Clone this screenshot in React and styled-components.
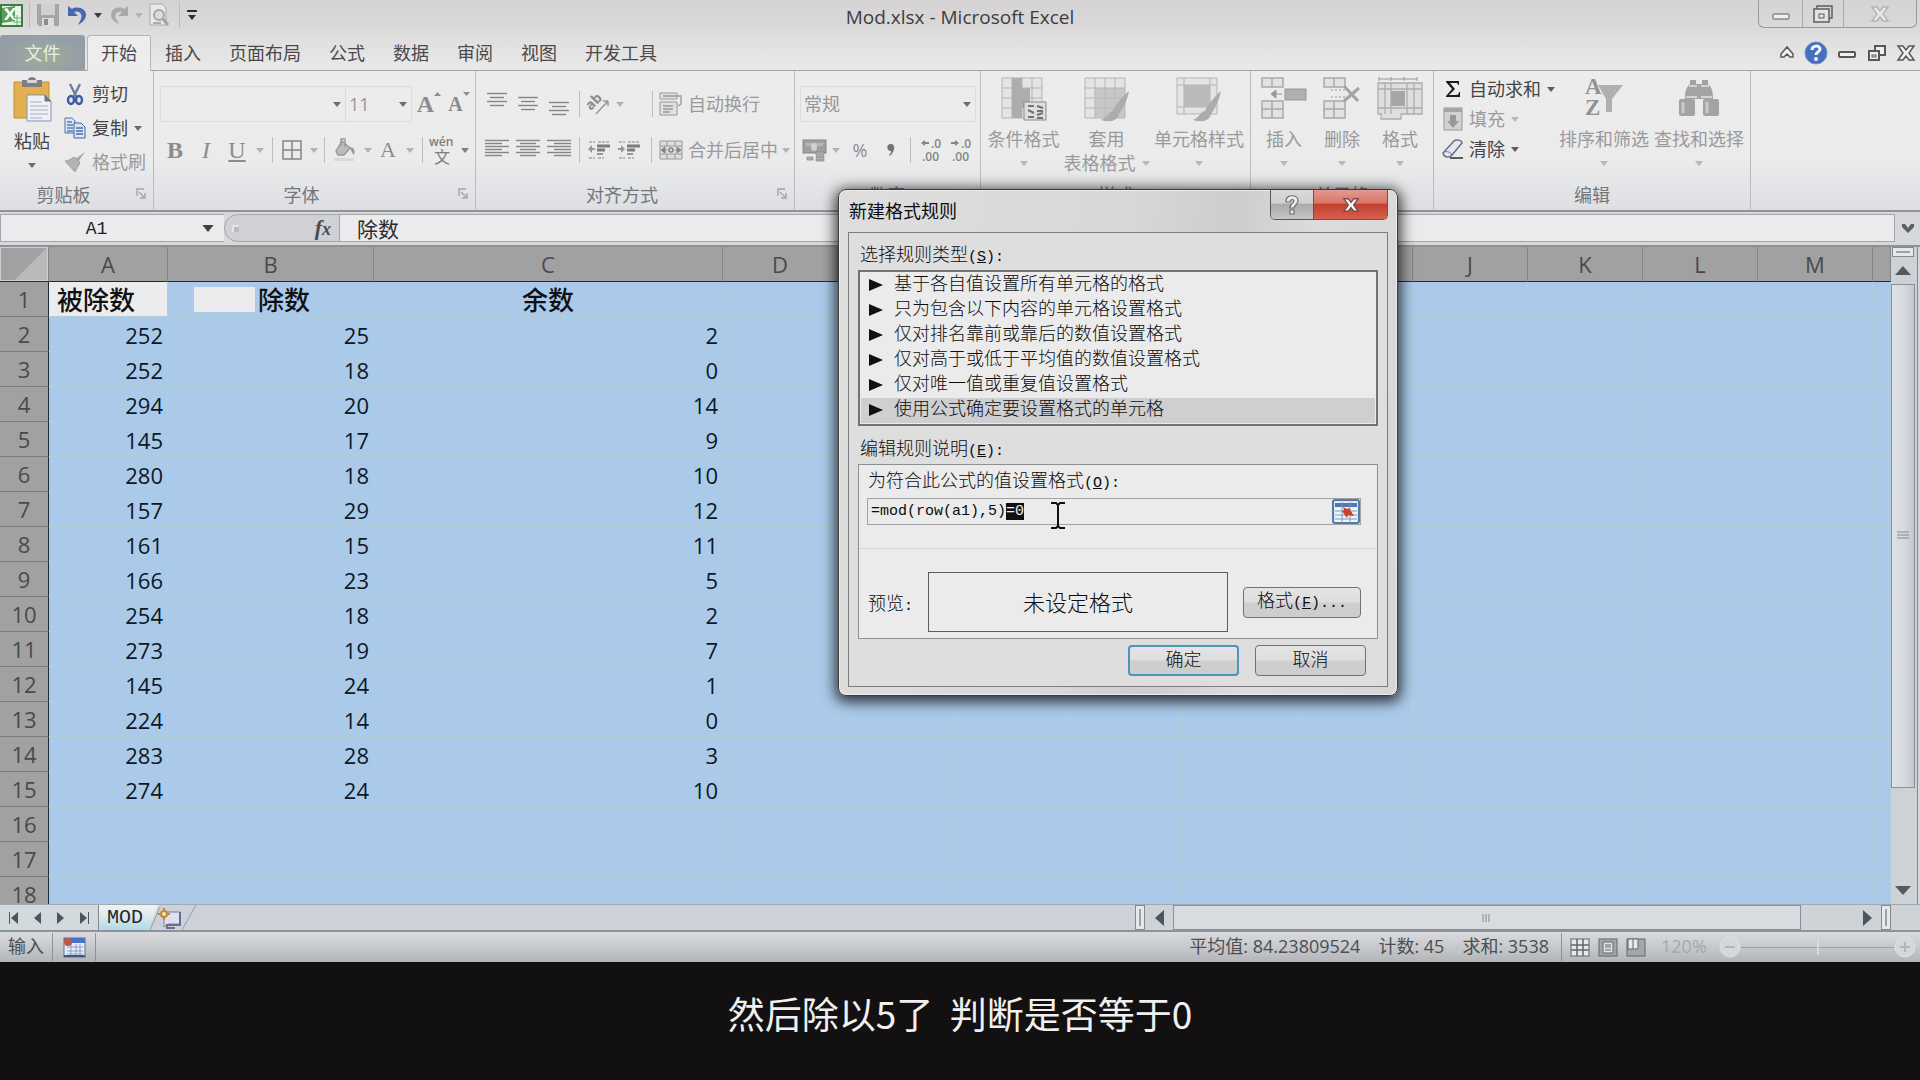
import React, { useEffect, useRef } from 'react'
import styled, { createGlobalStyle, css } from 'styled-components'

const uiFont = '"Open Sans", "Noto Sans CJK SC", sans-serif';
const monoFont = '"Liberation Mono", "Noto Sans CJK SC", monospace';

const GlobalStyle = createGlobalStyle`
    * {
        box-sizing: border-box;
    }

    body {
        margin: 0;
        background-color: #121011;
        font-family: ${uiFont};
        font-size: 18px;
        color: #454548;
    }

    button, input, select {
        font: inherit;
        color: inherit;
        margin: 0;
        padding: 0;
        border: none;
        background: none;
        outline: none;
    }

    svg {
        display: block;
        flex: none;
        overflow: visible;
    }
`;

const Screen = styled.div`
    display: flex;
    flex-direction: column;
    min-height: 100vh;
`;

const Workbook = styled.main`
    position: relative;
    display: flex;
    flex-direction: column;
    height: calc(100vh - 118px);
    background-color: #cdd1d6;
`;

const Subtitle = styled.p`
    flex: 1;
    display: flex;
    justify-content: center;
    align-items: center;
    margin: 0;
    padding-bottom: 16px;
    color: #f0f0f0;
    font-family: "Noto Sans CJK SC", sans-serif;
    font-size: 37px;
    line-height: 54px;
    white-space: pre;
`;

/* ---------- title bar and tabs ---------- */

const TitleBar = styled.header`
    display: grid;
    grid-template-columns: 1fr auto 1fr;
    align-items: start;
    height: 35px;
    background: linear-gradient(to bottom, #d5d3d3 0, #d9d7d7 22px, #dfdedf 35px);

    h1 {
        margin: 0;
        font-size: 19px;
        font-weight: 400;
        line-height: 34px;
        color: #3d3d3f;
    }
`;

const QuickAccess = styled.div`
    display: flex;
    align-items: center;
    height: 30px;
`;

const WindowControls = styled.div`
    justify-self: end;
    display: flex;
    height: 28px;
    margin-right: 3px;
    border: 1px solid #9a9a9c;
    border-top: none;
    border-radius: 0 0 6px 6px;

    button + button {
        border-left: 1px solid #a9a9ab;
    }
`;

const IconButton = styled.button`
    display: flex;
    justify-content: center;
    align-items: center;
    flex: none;
    width: ${props => props.$width || 30}px;
    height: 100%;
    color: #8b8b8d;
`;

const Separator = styled.span`
    display: flex;
    justify-content: center;
    flex: none;
    width: ${props => props.$width || 8}px;

    &::before {
        content: "";
        width: 1px;
        height: 26px;
        background-color: #bcbcbe;
    }
`;

const TabRow = styled.nav`
    display: flex;
    justify-content: space-between;
    height: 36px;
    background: linear-gradient(to bottom, #dfdedf, #e9e9e9);
    border-bottom: 1px solid #a3a5a9;
`;

const TabList = styled.div`
    display: flex;
`;

const Tab = styled.button`
    height: 36px;
    padding: 0 14px;
    border-radius: 3px 3px 0 0;
    color: #4a4a4c;
    line-height: 34px;

    ${props => props.$file && css`
        width: 85px;
        height: 35px;
        margin-right: 2px;
        background: radial-gradient(ellipse at 50% 60%, #a0ad9e, #949ca6 75%);
        color: #e6f0dc;
    `}

    ${props => props.$active && css`
        background-color: #ededed;
        box-shadow: inset 1px 1px 0 #b4b6ba, inset -1px 0 0 #b4b6ba;
    `}
`;

const TabTools = styled.div`
    display: flex;
`;

/* ---------- ribbon ---------- */

const RibbonBar = styled.div`
    display: flex;
    flex: none;
    height: 141px;
    background: linear-gradient(to bottom, #ececec 0, #ebebeb 90px, #dddfe3 139px);
    border-bottom: 2px solid #929497;
`;

const GroupBox = styled.section`
    position: relative;
    display: flex;
    flex-direction: column;
    flex: none;
    width: ${props => props.$width}px;
    border-right: 1px solid #b9bbbe;

    h2 {
        margin: 0;
        padding-right: ${props => (props.$launcher ? 26 : 0)}px;
        font-size: 18px;
        font-weight: 400;
        line-height: 30px;
        text-align: center;
        color: #73767b;
    }

    > button {
        position: absolute;
        right: 7px;
        bottom: 11px;
        width: 10px;
        height: 11px;
        color: #a3a5a8;
    }
`;

const GroupBody = styled.div`
    display: flex;
    height: 110px;
    padding-left: ${props => props.$pad || 0}px;
    flex-direction: ${props => (props.$rows ? 'column' : 'row')};
    gap: ${props => (props.$rows ? 10 : 0)}px;
    padding-top: ${props => (props.$rows ? 15 : 3)}px;
`;

const ToolRow = styled.div`
    display: flex;
    align-items: center;
    height: 36px;
`;

const Spacer = styled.span`
    flex: none;
    width: 20px;
`;

const SmallList = styled.div`
    display: flex;
    flex-direction: column;
    width: ${props => props.$width}px;
    padding-top: ${props => props.$top || 0}px;
`;

const SmallButton = styled.button`
    display: flex;
    align-items: center;
    gap: 4px;
    height: ${props => props.$height || 34}px;
    color: ${props => (props.$on ? '#454548' : '#9a9a9c')};
    line-height: 24px;
    white-space: nowrap;

    > span {
        margin-right: 2px;
    }
`;

const IconSlot = styled.i`
    display: flex;
    justify-content: center;
    width: ${props => props.$width || 24}px;
`;

const BigButton = styled.button`
    display: flex;
    flex-direction: column;
    align-items: center;
    flex: none;
    width: ${props => props.$width}px;
    padding-top: 3px;
    color: ${props => (props.$on ? '#454548' : '#9a9a9c')};
    line-height: 24px;
    white-space: nowrap;

    > svg {
        margin-bottom: 6px;
    }
`;

const CaretLine = styled.span`
    display: flex;
    align-items: center;
    gap: 6px;
    height: 24px;
`;

const ComboBox = styled.label`
    display: flex;
    align-items: center;
    width: ${props => props.$width}px;
    height: 36px;
    padding-right: 4px;
    border: 1px solid #dcdcdd;
    color: #969698;

    & + & {
        border-left: none;
    }

    select {
        flex: 1;
        min-width: 0;
        height: 34px;
        padding-left: 3px;
        appearance: none;
    }

    svg {
        color: #6c6c6e;
    }
`;

const Letter = styled.span`
    font-family: "Liberation Serif", serif;
    font-size: ${props => props.$size || 24}px;
    line-height: 28px;
    font-weight: ${props => (props.$bold ? 700 : 400)};
    font-style: ${props => (props.$italic ? 'italic' : 'normal')};
    text-decoration: ${props => (props.$underline ? 'underline' : 'none')};
`;

const SizeMark = styled.span`
    align-self: flex-start;
    padding-top: 6px;
`;

/* ---------- formula bar ---------- */

const FormulaBar = styled.div`
    display: flex;
    flex: none;
    height: 35px;
    padding: 2px 0 3px;
    background-color: #d6d8dc;
    border-bottom: 2px solid #8f9193;
`;

const NameBox = styled.div`
    display: flex;
    align-items: center;
    width: 224px;
    border: 1px solid #a3a5a8;
    border-right: none;
    background-color: #ebebed;

    input {
        flex: 1;
        min-width: 0;
        padding-top: 2px;
        text-align: center;
        font-family: ${monoFont};
        font-size: 18px;
        color: #222;
    }

    button {
        width: 32px;
        display: flex;
        justify-content: center;
        color: #3f3f42;
    }
`;

const FunctionCap = styled.div`
    display: flex;
    align-items: center;
    justify-content: space-between;
    width: 116px;
    padding: 0 8px 0 7px;
    border: 1px solid #a3a5a8;
    border-radius: 16px 0 0 16px;
    background-color: #cfd1d6;

    &::before {
        content: "";
        width: 7px;
        height: 7px;
        background-color: #b9bbc1;
        box-shadow: inset 2px 2px 0 #e4e5e9;
    }

    button {
        font: italic 700 22px/26px "Liberation Serif", serif;
        color: #4a4a4d;
    }

    sub {
        font-size: 18px;
        line-height: 0;
        vertical-align: baseline;
    }
`;

const FormulaInput = styled.input`
    && {
        flex: 1;
        min-width: 0;
        padding-left: 17px;
        border: 1px solid #a3a5a8;
        border-left: none;
        background-color: #ebebed;
        font-family: ${monoFont};
        font-size: 21px;
        color: #2c2c2e;
    }
`;

/* ---------- sheet ---------- */

const SheetArea = styled.div`
    display: flex;
    flex: 1;
    min-height: 0;
    overflow: hidden;
`;

const SheetView = styled.div`
    flex: 1;
    min-width: 0;
    overflow: hidden;
    background-color: #abcaea;
`;

const Sheet = styled.table`
    width: 100%;
    table-layout: fixed;
    border-collapse: separate;
    border-spacing: 0;
    font-size: 22px;

    th, td {
        height: 35px;
        padding: 0;
        line-height: 30px;
    }

    th {
        background-color: #a1a1a1;
        font-weight: 400;
        color: #4a4a4c;
    }

    thead th {
        border-right: 1px solid #858587;
        border-bottom: 1px solid #1d2c3c;
    }

    tbody th {
        border-right: 1px solid #1d2c3c;
        border-bottom: 1px solid #7b7b7d;
    }
`;

const Corner = styled.th`
    background: linear-gradient(135deg, #a1a1a4 58%, #b9b9bc 58%) !important;
    box-shadow: inset 1px 1px 0 #cfcfd2, inset -1px -1px 0 #cfcfd2;
`;

const Cell = styled.td`
    border-right: 1px solid #b0cedf;
    border-bottom: 1px solid #b0cfd9;
    text-align: right;
    color: #0c1826;

    && {
        padding: 1px 4px 0 0;
    }

    ${props => props.$head && css`
        font-family: "Noto Sans CJK SC", sans-serif;
        font-size: 26px;
        font-weight: 500;
        color: #111;

        && {
            padding: ${props.$head === 'center' ? '0' : '0 0 0 8px'};
            text-align: ${props.$head === 'center' ? 'center' : 'left'};
        }
    `}

    ${props => props.$current && css`
        background-color: #ececee;
    `}
`;

const Divisor = styled.span`
    display: flex;
    align-items: center;
    gap: 3px;
    padding-left: 18px;

    &::before {
        content: "";
        width: 61px;
        height: 25px;
        background-color: #ebebed;
    }
`;

const VScroll = styled.div`
    display: flex;
    flex-direction: column;
    align-items: center;
    width: 29px;
    padding-right: 5px;
    background: linear-gradient(to right, #cdd2d7 26px, #85898d 26px, #85898d 27px, #d3d6da 27px);

    button {
        display: flex;
        justify-content: center;
        align-items: center;
        width: 100%;
        height: 27px;
        color: #55595e;
    }
`;

const SplitBox = styled.span`
    flex: none;
    width: ${props => (props.$vertical ? 10 : 22)}px;
    height: ${props => (props.$vertical ? 25 : 10)}px;
    border: 1px solid #85898d;
    box-shadow: inset 0 0 0 3px #e6e9ec;
    background-color: #9da1a5;
`;

const VThumb = styled.div`
    display: flex;
    justify-content: center;
    align-items: center;
    width: 100%;
    height: 504px;
    border: 1px solid #8c8f98;
    background: linear-gradient(to right, #dfdfe8, #d8dbe0 50%, #c3c8cc);
    color: #85898d;
`;

const ScrollSpace = styled.span`
    flex: 1;
`;

/* ---------- sheet tabs and status ---------- */

const SheetBar = styled.div`
    display: flex;
    align-items: stretch;
    flex: none;
    height: 28px;
    border-top: 1px solid #9fabb2;
    border-bottom: 2px solid #8f9299;
    background-color: #cdd1da;
`;

const SheetNav = styled.div`
    display: flex;
    width: 98px;
    padding: 0 2px;
    background-color: #d3dade;
    color: #4d545b;
`;

const SheetTab = styled.button`
    width: 60px;
    padding-right: 7px;
    border-left: 1px solid #85898d;
    background: linear-gradient(to bottom, #f0f2f2, #dbe8ec 50%, #aedbe8);
    clip-path: polygon(0 0, 100% 0, 51px 100%, 0 100%);
    font-family: ${monoFont};
    font-size: 20px;
    line-height: 26px;
    color: #22282e;
`;

const NewSheetButton = styled.button`
    width: 40px;
    margin-left: -8px;
`;

const HScroll = styled.div`
    display: flex;
    align-items: stretch;
    width: 785px;
    margin-left: auto;
    padding-right: 29px;
    background-color: #cdd3d6;

    button {
        display: flex;
        justify-content: center;
        align-items: center;
        width: 28px;
        color: #4d545b;
    }
`;

const HThumb = styled.div`
    display: flex;
    justify-content: center;
    align-items: center;
    width: 628px;
    border: 1px solid #85909a;
    background-color: #d8dbe0;
    color: #85898d;
`;

const StatusBar = styled.footer`
    display: flex;
    justify-content: space-between;
    align-items: center;
    flex: none;
    height: 30px;
    background: linear-gradient(to bottom, #d9dbdf, #c3c5c9 60%, #b2b5b8);
    color: #4b4e52;
`;

const StatusSide = styled.div`
    display: flex;
    align-items: center;
    gap: 8px;
    padding-left: 8px;
`;

const StatusText = styled.span`
    padding-bottom: 2px;
    line-height: 26px;
    white-space: nowrap;
`;

const Totals = styled.div`
    display: flex;
    gap: 18px;
    margin-right: 4px;
`;

const StatusLine = styled.i`
    width: 1px;
    height: 28px;
    background-color: #8e9297;
`;

const ZoomSlider = styled.div`
    display: flex;
    align-items: center;
    margin: 0 4px 0 7px;
    color: #a4a8ac;

    label {
        width: 58px;
        padding-bottom: 2px;
        line-height: 26px;
    }

    button {
        width: 22px;
        height: 22px;
    }

    input {
        width: 153px;
        height: 22px;
        appearance: none;
        background: linear-gradient(#9da0a4, #9da0a4) center / 100% 1px no-repeat;
    }

    input::-webkit-slider-thumb {
        appearance: none;
        width: 2px;
        height: 16px;
        background-color: #d8dadd;
    }
`;

/* ---------- dialog ---------- */

const Dialog = styled.form`
    position: absolute;
    top: 189px;
    left: 838px;
    width: 560px;
    padding: 0 9px 8px;
    border: 1px solid #3c3c3e;
    border-radius: 8px;
    background: linear-gradient(100deg, #dedede 0, #d8d8d8 45%, #cdcdcd 62%, #dcdcdc 75%, #d6d6d6);
    box-shadow: inset 0 0 0 1px #ececec, 0 3px 14px 3px rgba(0, 0, 0, 0.75);
    color: #0c0c0e;
    font-family: ${monoFont};
    font-size: 18px;
    font-weight: 300;

    label, h3 {
        height: 24px;
        margin: 0;
        font-weight: 300;
        font-size: 18px;
        line-height: 25px;
    }

    small {
        font-size: 15px;
        line-height: 1;
    }
`;

const DialogTitle = styled.div`
    display: flex;
    justify-content: space-between;
    height: 42px;

    h2 {
        margin: 0;
        padding-left: 1px;
        font-family: ${uiFont};
        font-size: 18px;
        font-weight: 400;
        line-height: 42px;
    }
`;

const DialogControls = styled.div`
    display: flex;
    height: 30px;
    border: 1px solid #58585a;
    border-top: none;
    border-radius: 0 0 5px 5px;
    overflow: hidden;

    button {
        display: flex;
        justify-content: center;
        align-items: center;
        width: 42px;
        background: linear-gradient(to bottom, #dadada, #cfcfcf 45%, #aaaaac 50%, #c6c6c8);
    }

    button + button {
        width: 74px;
        border-left: 1px solid #58585a;
        background: linear-gradient(to bottom, #e29a90, #d87468 45%, #c2402e 50%, #d8604f);
    }
`;

const DialogBody = styled.div`
    padding: 11px 9px 10px;
    border: 1px solid #7d7d7f;
    background-color: #dedede;

    h3 {
        padding-left: 2px;
    }
`;

const RuleList = styled.ul`
    margin: 2px 0 12px;
    padding: 1px;
    border: 2px solid #727274;
    background-color: #ebebeb;
    list-style: none;
`;

const Rule = styled.li`
    display: flex;
    align-items: center;
    gap: 11px;
    height: 25px;
    padding-left: 8px;
    line-height: 25px;
    background-color: ${props => (props.$selected ? '#cfcfd2' : 'transparent')};

    svg {
        margin-bottom: 2px;
    }
`;

const RulePanel = styled.div`
    margin-top: 2px;
    padding: 5px 0 6px;
    border: 1px solid #8f8f91;
    background-color: #ebebeb;

    > label {
        display: block;
        padding-left: 9px;
    }

    hr {
        margin: 23px 0;
        border: none;
        border-top: 1px solid #d3d3d5;
    }
`;

const RefField = styled.div`
    display: flex;
    height: 27px;
    margin: 4px 16px 0 8px;
    border: 1px solid #a3a3a5;

    input {
        flex: 1;
        min-width: 0;
        padding-left: 3px;
        font-size: 15px;
    }

    input::selection {
        background-color: #101012;
        color: #f0f0f0;
    }

    button {
        display: flex;
        justify-content: center;
        align-items: center;
        width: 28px;
        border: 2px solid #557ba6;
        border-radius: 3px;
        background-color: #dce6f0;
    }
`;

const PreviewRow = styled.div`
    display: flex;
    align-items: center;
    padding: 0 16px 0 9px;

    > span {
        width: 60px;
    }

    output {
        flex: 1;
        display: flex;
        justify-content: center;
        align-items: center;
        height: 60px;
        margin-right: 15px;
        padding-bottom: 2px;
        border: 1px solid #5d5d5f;
        font-size: 22px;
    }
`;

const PushButton = styled.button`
    width: ${props => props.$width || 111}px;
    height: 31px;
    border: 1px solid #727274;
    border-radius: 4px;
    background: linear-gradient(to bottom, #e4e4e4, #dedede 48%, #cfcfcf 52%, #cdcdcd);
    line-height: 26px;

    ${props => props.$primary && css`
        border: 2px solid #4797b5;
    `}
`;

const DialogActions = styled.div`
    display: flex;
    justify-content: flex-end;
    gap: 16px;
    margin-top: 6px;
    padding-right: 12px;
`;

const Pointer = styled.svg`
    position: absolute;
    top: 502px;
    left: 1050px;
`;

/* ---------- icons ---------- */

const Caret = ({ color = 'currentColor', size = 8 }) => (
    <svg width={size} height={size / 2 + 1} viewBox="0 0 8 5"><path d="M0 0h8L4 5z" fill={color} /></svg>
);

const Arrow = ({ turn = 0, width = 16, height = 9 }) => (
    <svg width={turn % 180 ? height : width} height={turn % 180 ? width : height} viewBox={turn % 180 ? '0 0 9 16' : '0 0 16 9'}>
        <path
            d={{ 0: 'M8 0l8 9H0z', 90: 'M9 8L0 0v16z', 180: 'M8 9l8-9H0z', 270: 'M0 8l9-8v16z' }[turn]}
            fill="currentColor"
        />
    </svg>
);

const ExcelIcon = () => (
    <svg width="24" height="24" viewBox="0 0 24 24">
        <rect x="1" y="2" width="21" height="21" fill="#e9f3e6" stroke="#3d7d44" strokeWidth="2" />
        <path d="M2 5l13-2v15L2 20z" fill="#55a05a" />
        <path d="M4 6l4 5-4 6h3l3-4 3 4h3l-4-6 4-6h-3l-3 4-3-4z" fill="#f4faf2" />
        <path d="M13 15h8M13 19h8M17 12v10" stroke="#6fae73" />
    </svg>
);

const SaveIcon = () => (
    <svg width="24" height="24" viewBox="0 0 24 24">
        <path d="M1 1h22v22H3l-2-2z" fill="#a5a5a7" />
        <rect x="5" y="1" width="14" height="11" fill="#cfcfd1" />
        <rect x="6" y="15" width="12" height="8" fill="#dcdcde" />
        <rect x="8" y="16" width="4" height="6" fill="#8b8b8d" />
    </svg>
);

const UndoIcon = ({ color, flip }) => (
    <svg width="20" height="22" viewBox="0 0 20 22">
        <path
            d={flip ? 'M19 2v10H9l4-4c-5-1-8 2-6 7l3 5C2 17 0 10 4 6c3-3 8-3 11-1z' : 'M1 2v10h10L7 8c5-2 9 2 7 7l-3 6c8-4 10-11 6-15-4-3-9-3-12-1z'}
            fill={color}
        />
    </svg>
);

const PreviewIcon = () => (
    <svg width="22" height="24" viewBox="0 0 22 24">
        <path d="M2 1h12l4 4v17H2z" fill="#e9e9eb" stroke="#ababad" />
        <circle cx="11" cy="12" r="5" fill="#dcdcde" stroke="#a5a5a7" strokeWidth="2" />
        <path d="M15 16l5 6" stroke="#a5a5a7" strokeWidth="3" />
        <path d="M5 20h8" stroke="#ababad" strokeWidth="2" />
    </svg>
);

const MinimizeIcon = ({ small }) => (
    <svg width="18" height="18" viewBox="0 0 18 18">
        <rect x="1" y={small ? 8 : 9} width="16" height="5" rx="1" fill="#f0f0f0" stroke="#58585a" strokeWidth={small ? 2 : 1} />
    </svg>
);

const RestoreIcon = () => (
    <svg width="20" height="18" viewBox="0 0 20 18">
        <path d="M4 4V1h15v12h-3" fill="none" stroke="#5d5d5f" strokeWidth="1.5" />
        <rect x="1" y="4" width="15" height="13" fill="#e4e4e6" stroke="#5d5d5f" strokeWidth="1.5" />
        <rect x="6" y="9" width="5" height="4" fill="none" stroke="#5d5d5f" />
    </svg>
);

const SmallRestoreIcon = () => (
    <svg width="20" height="18" viewBox="0 0 20 18">
        <rect x="8" y="2" width="10" height="9" fill="#f0f0f0" stroke="#58585a" strokeWidth="2" />
        <rect x="2" y="7" width="10" height="9" fill="#f0f0f0" stroke="#58585a" strokeWidth="2" />
        <rect x="5" y="11" width="4" height="2" fill="#f0f0f0" stroke="#58585a" />
    </svg>
);

const CloseIcon = ({ fill, stroke, width = 18 }) => (
    <svg width={width} height="16" viewBox="0 0 18 16">
        <path d="M1 1h5l3 4 3-4h5l-5 7 5 7h-5l-3-4-3 4H1l5-7z" fill={fill} stroke={stroke} strokeWidth="1.5" />
    </svg>
);

const CollapseIcon = () => (
    <svg width="14" height="13" viewBox="0 0 14 13">
        <path d="M1 8l6-7 6 7v3h-3L7 8l-3 3H1z" fill="#f0f0f0" stroke="#58585a" strokeWidth="1.5" />
    </svg>
);

const HelpIcon = () => (
    <svg width="24" height="24" viewBox="0 0 24 24">
        <circle cx="12" cy="12" r="11" fill="#4570bd" stroke="#6d8fcb" />
        <path d="M8 9c0-5 8-5 8-1 0 3-4 3-4 6" fill="none" stroke="#f0f4fa" strokeWidth="3" />
        <circle cx="12" cy="18" r="2" fill="#f0f4fa" />
    </svg>
);

const PasteIcon = () => (
    <svg width="42" height="46" viewBox="0 0 42 46">
        <path d="M3 5h35v36H3z" fill="#e2b04f" stroke="#c08f3a" />
        <path d="M11 3h6c0-4 8-4 8 0h6v7H11z" fill="#7f7f83" />
        <path d="M16 3h10v3H16z" fill="#d6d6d8" />
        <path d="M16 18h18l6 6v20H16z" fill="#eef2f7" stroke="#8593a8" />
        <path d="M34 18v6h6" fill="#6d7583" stroke="#6d7583" />
        <path d="M19 25h12M19 29h18M19 33h18M19 37h18M19 41h12" stroke="#a6b0c0" />
    </svg>
);

const CutIcon = () => (
    <svg width="18" height="22" viewBox="0 0 18 22">
        <path d="M4 1l7 14M14 1L7 15" stroke="#6b7fa3" strokeWidth="2.4" />
        <ellipse cx="5" cy="17" rx="3" ry="4" fill="none" stroke="#3b5ca8" strokeWidth="2.4" />
        <ellipse cx="13" cy="17" rx="3" ry="4" fill="none" stroke="#3b5ca8" strokeWidth="2.4" />
    </svg>
);

const CopyIcon = () => (
    <svg width="22" height="22" viewBox="0 0 22 22">
        <path d="M1 1h7l3 3v12H1z" fill="#dbe6f4" stroke="#5272a5" />
        <path d="M3 5h5M3 8h6M3 11h6M3 14h6" stroke="#5d7fb5" strokeWidth="1.4" />
        <path d="M10 6h7l4 4v11H10z" fill="#dbe6f4" stroke="#3f62a0" />
        <path d="M12 11h7M12 14h7M12 17h7" stroke="#4a6fae" strokeWidth="1.4" />
    </svg>
);

const BrushIcon = () => (
    <svg width="22" height="20" viewBox="0 0 22 20">
        <path d="M21 0l-7 10-3-3z" fill="#a9a9ab" />
        <path d="M10 5l6 5c-1 4-4 7-5 10L1 9c3 0 6-2 9-4z" fill="#b3b3b5" stroke="#a0a0a2" />
    </svg>
);

// one line per entry: [x start, x end]
const lineSets = {
    narrow: [[2, 22], [5, 19], [2, 22], [5, 19]],
    left: [[0, 24], [0, 17], [0, 24], [0, 17], [0, 24], [0, 17]],
    center: [[0, 24], [4, 20], [0, 24], [4, 20], [0, 24], [4, 20]],
    right: [[0, 24], [7, 24], [0, 24], [7, 24], [0, 24], [7, 24]],
};

const LinesIcon = ({ kind, y = 1 }) => (
    <svg width="24" height="24" viewBox="0 0 24 24">
        {lineSets[kind].map(([from, to], i) => (
            <path key={i} d={`M${from} ${y + i * (kind === 'narrow' ? 4 : 3) + 1.5}H${to}`} stroke="#858587" strokeWidth="1.4" />
        ))}
    </svg>
);

const OrientationIcon = () => (
    <svg width="24" height="24" viewBox="0 0 24 24">
        <text x="0" y="14" transform="rotate(-45 8 12)" fontSize="14" fontWeight="700" fill="#8b8b8d">ab</text>
        <path d="M9 22L21 9M21 9v5M21 9h-5" fill="none" stroke="#98989a" strokeWidth="1.5" />
    </svg>
);

const IndentIcon = ({ flip }) => (
    <svg width="22" height="20" viewBox="0 0 22 20">
        <path d="M1 2h6M10 2h12M1 18h6M10 18h6" stroke="#858587" strokeDasharray="3 1" />
        <path d="M9 6h13M9 10h8" stroke="#7d7d7f" strokeWidth="3" />
        <path d="M9 14h6" stroke="#7d7d7f" strokeWidth="1.5" />
        <path d={flip ? 'M0 8h3V5l4 4-4 4v-3H0z' : 'M7 8H4V5L0 9l4 4v-3h3z'} fill="#98989a" />
    </svg>
);

const WrapIcon = () => (
    <svg width="24" height="24" viewBox="0 0 24 24">
        <path d="M1 1h17v6H1zM1 10h17v13H1z" fill="#e2e2e4" stroke="#98989a" />
        <path d="M4 4h18v8l-3 2M4 14h10M4 17h10M4 20h7" fill="none" stroke="#98989a" strokeWidth="1.3" />
    </svg>
);

const MergeIcon = () => (
    <svg width="24" height="20" viewBox="0 0 24 20">
        <path d="M1 1h22v18H1zM1 6h22M1 14h22M8 1v5M16 1v5M8 14v5M16 14v5" fill="#dededf" stroke="#98989a" />
        <path d="M6 7l-4 3 4 3zM18 7l4 3-4 3zM4 10h4M16 10h4" fill="#858587" stroke="#858587" />
        <circle cx="12" cy="10" r="2" fill="none" stroke="#858587" strokeWidth="1.6" />
    </svg>
);

const BordersIcon = () => (
    <svg width="20" height="20" viewBox="0 0 20 20">
        <path d="M1 1h18v18H1zM10 1v18M1 10h18" fill="none" stroke="#858587" strokeWidth="1.5" />
    </svg>
);

const BucketIcon = () => (
    <svg width="24" height="24" viewBox="0 0 24 24">
        <path d="M9 3l8 7-6 7H5l-2-4z" fill="#bcbcbe" stroke="#98989a" strokeWidth="1.4" />
        <path d="M8 8V1h4v8" fill="none" stroke="#98989a" strokeWidth="1.4" />
        <path d="M17 9c5 1 5 4 4 8-2-2-3-4-4-8z" fill="#98989a" />
        <path d="M1 20h20v3H1z" fill="#dadadc" />
    </svg>
);

const CurrencyIcon = () => (
    <svg width="26" height="24" viewBox="0 0 26 24">
        <rect x="1" y="2" width="23" height="13" fill="#a0a0a2" stroke="#858587" />
        <path d="M4 5h17v3H4z" fill="#b8b8ba" />
        <ellipse cx="12" cy="9" rx="3" ry="4" fill="#d0d0d2" />
        <path d="M14 14h8v3h-8zM14 18h8v2h-8zM14 21h8v2h-8zM5 19h6v3H5z" fill="#b0b0b2" stroke="#858587" strokeWidth="0.7" />
    </svg>
);

const DecimalIcon = ({ flip }) => (
    <svg width="22" height="24" viewBox="0 0 22 24" fill="#858587" fontSize="12" fontWeight="600">
        <path d={flip ? 'M1 4h4V2l4 3-4 3V6H1z' : 'M9 4H5V2L1 5l4 3V6h4z'} />
        <text x="11" y="10">.0</text>
        <text x="2" y="23">.00</text>
    </svg>
);

const gridLines = 'M1 1h40v40H1zM1 11h40M1 21h40M1 31h40M11 1v40M21 1v40M31 1v40';

const PaintOver = () => <path d="M45 14c-4 3-14 14-16 20-4 0-5 6-12 9 8 3 17 1 18-6 4-5 9-16 10-23z" fill="#acacae" />;

const ConditionalIcon = () => (
    <svg width="46" height="44" viewBox="0 0 46 44">
        <path d={gridLines} fill="#e4e4e6" stroke="#b5b5b7" />
        <path d="M11 1h10v10h-10zM11 11h18v20h-18zM11 31h10v10h-10z" fill="#adadaf" />
        <rect x="23" y="25" width="22" height="18" fill="#dededf" stroke="#8b8b8d" />
        <path d="M27 29h6M27 33l6 3M27 40h6M36 29l6 2M36 34h6M36 38l6-2M36 41h6" stroke="#727274" strokeWidth="2" />
    </svg>
);

const TableStyleIcon = () => (
    <svg width="46" height="44" viewBox="0 0 46 44">
        <path d={gridLines} fill="#e4e4e6" stroke="#b5b5b7" />
        <path d="M11 11h30v30H11z" fill="#bababc" opacity="0.7" />
        <PaintOver />
    </svg>
);

const CellStyleIcon = () => (
    <svg width="46" height="44" viewBox="0 0 46 44">
        <path d="M1 1h40v36H1zM1 8h40M1 30h40M8 1v36M34 1v36" fill="#e4e4e6" stroke="#b5b5b7" />
        <path d="M8 8h26v22H8z" fill="#bababc" />
        <PaintOver />
    </svg>
);

const InsertIcon = () => (
    <svg width="46" height="44" viewBox="0 0 46 44">
        <path d="M1 1h21v9H1zM11 1v9M1 24h21v17H1zM11 24v17M1 32h21" fill="#e2e2e4" stroke="#a9a9ab" strokeWidth="1.5" />
        <rect x="24" y="12" width="21" height="11" fill="#b0b0b2" stroke="#98989a" />
        <path d="M10 17l5-4v8zM14 17h7" fill="#98989a" stroke="#98989a" />
    </svg>
);

const DeleteIcon = () => (
    <svg width="38" height="44" viewBox="0 0 38 44">
        <path d="M1 1h21v9H1zM11 1v9M1 24h21v17H1zM11 24v17M1 32h21" fill="#e2e2e4" stroke="#a9a9ab" strokeWidth="1.5" />
        <path d="M8 13h14M8 20h14" stroke="#98989a" strokeDasharray="2 2" />
        <path d="M21 9l14 15M36 11L21 24" stroke="#a3a3a5" strokeWidth="3" />
    </svg>
);

const FormatIcon = () => (
    <svg width="46" height="44" viewBox="0 0 46 44">
        <path d="M1 6h44v31H24v5H4v-5H1zM1 12h44M1 31h44M8 6v31M14 6v31M30 6v31M37 6v31" fill="#dededf" stroke="#adadaf" strokeWidth="1.3" />
        <rect x="14" y="14" width="14" height="15" fill="#a6a6a8" />
        <path d="M2 2h38M2 0v4M14 0v4M27 0v4M40 0v4" stroke="#98989a" />
    </svg>
);

const FillIcon = () => (
    <svg width="20" height="24" viewBox="0 0 20 24">
        <rect x="1" y="1" width="18" height="22" fill="#d2d2d4" stroke="#98989a" />
        <path d="M1 1h18v4H1z" fill="#a6a6a8" />
        <path d="M7 8h6v6h3l-6 7-6-7h3z" fill="#98989a" />
    </svg>
);

const EraserIcon = () => (
    <svg width="22" height="20" viewBox="0 0 22 20">
        <path d="M1 14L12 2c2-2 8-1 8 2L10 16c-2 3-8 3-9-2z" fill="#e4e7f0" stroke="#66708a" strokeWidth="1.5" />
        <path d="M2 13c3-1 7 0 8 3" fill="none" stroke="#66708a" />
        <path d="M8 19h13" stroke="#2d2d30" strokeWidth="1.5" />
    </svg>
);

const SortIcon = () => (
    <svg width="38" height="44" viewBox="0 0 38 44" fill="#929294" fontFamily="Liberation Serif" fontWeight="700">
        <path d="M13 8h25L27 22v13h-6V22z" fill="#b0b0b2" />
        <text x="0" y="17" fontSize="23">A</text>
        <text x="0" y="38" fontSize="23">Z</text>
    </svg>
);

const BinocularsIcon = () => (
    <svg width="42" height="44" viewBox="0 0 42 44" fill="#a3a3a5">
        <path d="M12 3h6v4h3v15H7c0-7 1-12 5-15z" />
        <path d="M24 3h6v4c4 3 5 8 5 15H21V7h3z" />
        <rect x="1" y="22" width="16" height="17" rx="2" />
        <rect x="25" y="22" width="16" height="17" rx="2" />
        <path d="M11 9h8M23 9h8M8 20h11M23 20h11" stroke="#d4d4d6" strokeWidth="2" />
        <path d="M5 25v11M29 25v11" stroke="#cacacc" strokeWidth="3" />
    </svg>
);

const LauncherIcon = () => (
    <svg width="10" height="11" viewBox="0 0 10 11">
        <path d="M1 8V1h7M3 4l5 5M9 5v5H4" fill="none" stroke="currentColor" strokeWidth="1.4" />
    </svg>
);

const GripIcon = ({ vertical }) => (
    <svg width="12" height="12" viewBox="0 0 12 12">
        <path d={vertical ? 'M2 2v8M5 2v8M8 2v8' : 'M0 2h12M0 5h12M0 8h12'} stroke="currentColor" />
    </svg>
);

const NewSheetIcon = () => (
    <svg width="48" height="25" viewBox="0 0 48 25">
        <path d="M0 25L10 0h36L32 25z" fill="#cdd1da" />
        <path d="M46 0L32 25M0 25L10 2" stroke="#98a0a8" />
        <path d="M14 7h16v12H18l-4 3z" fill="#dfe1ef" stroke="#7a7f9c" />
        <path d="M30 7v13H17v3h8" fill="none" stroke="#686e92" strokeWidth="2" />
        <circle cx="14" cy="9" r="3" fill="#f4e3b0" stroke="#bd8b35" strokeWidth="2" />
        <path d="M14 3v2M14 13v2M8 9h2M18 9h2" stroke="#bd8b35" strokeWidth="2" />
    </svg>
);

const MacroIcon = () => (
    <svg width="24" height="22" viewBox="0 0 24 22">
        <rect x="2" y="2" width="21" height="19" fill="#e8ecf4" stroke="#5271ad" />
        <path d="M2 2h21v5H2z" fill="#4a74c4" />
        <path d="M5 11h16M5 15h16M5 18h16M9 8v12M14 8v12M18 8v12" stroke="#8ba3cf" />
        <path d="M2 20h21" stroke="#47587d" strokeWidth="2" />
        <circle cx="6" cy="6" r="4" fill="#c5553f" />
    </svg>
);

const ViewIcon = ({ kind }) => (
    <svg width="20" height="19" viewBox="0 0 20 19">
        <rect x="1" y="1" width="18" height="17" fill={kind === 'normal' ? '#e6e8ea' : '#a3a7ab'} stroke="#62666b" />
        {kind === 'normal' && <path d="M1 7h18M1 12h18M7 1v17M13 1v17" stroke="#62666b" strokeWidth="1.5" />}
        {kind === 'layout' && <path d="M5 4h10v11H5zM7 7h6M7 9h6M7 12h6" fill="#e0e2e4" stroke="#62666b" />}
        {kind === 'break' && <path d="M2 1h10v10H2zM7 1v10" fill="#e6e8ea" stroke="#62666b" />}
    </svg>
);

const ZoomButtonIcon = ({ plus }) => (
    <svg width="22" height="22" viewBox="0 0 22 22">
        <circle cx="11" cy="11" r="10" fill="#d5d7da" stroke="#dfe1e3" />
        <path d={plus ? 'M6 11h10M11 6v10' : 'M6 11h10'} stroke="#b4b7ba" strokeWidth="2" />
    </svg>
);

const RefPickerIcon = () => (
    <svg width="22" height="20" viewBox="0 0 22 20">
        <rect width="22" height="20" fill="#eef3f8" />
        <path d="M0 1h22v4H0z" fill="#4f78ae" />
        <path d="M0 9h22M0 13h22M0 17h22M7 0v20M15 0v20" stroke="#7d9cc4" />
        <path d="M8 5l4 2 2-1 5 8-6-1-1 3-5-7 2-1z" fill="#c9402e" />
    </svg>
);

/* ---------- data ---------- */

const tabs = ['插入', '页面布局', '公式', '数据', '审阅', '视图', '开发工具'];

const columns = [
    ['A', 119], ['B', 206], ['C', 349], ['D', 115], ['E', 115], ['F', 115], ['G', 115],
    ['H', 115], ['I', 115], ['J', 115], ['K', 115], ['L', 115], ['M', 115], ['', null],
];

const values = [
    [252, 25, 2], [252, 18, 0], [294, 20, 14], [145, 17, 9], [280, 18, 10], [157, 29, 12], [161, 15, 11],
    [166, 23, 5], [254, 18, 2], [273, 19, 7], [145, 24, 1], [224, 14, 0], [283, 28, 3], [274, 24, 10],
];

const rules = [
    '基于各自值设置所有单元格的格式',
    '只为包含以下内容的单元格设置格式',
    '仅对排名靠前或靠后的数值设置格式',
    '仅对高于或低于平均值的数值设置格式',
    '仅对唯一值或重复值设置格式',
    '使用公式确定要设置格式的单元格',
];

/* ---------- parts ---------- */

const Group = ({ title, width, pad, rows, launcher, children }) => (
    <GroupBox $width={width} $launcher={launcher}>
        <GroupBody $pad={pad} $rows={rows}>{children}</GroupBody>
        <h2>{title}</h2>
        {launcher && <button type="button" aria-label={title + '选项'}><LauncherIcon /></button>}
    </GroupBox>
);

const CaretButton = ({ label, width = 16, color = '#b3b3b5' }) => (
    <IconButton type="button" aria-label={label} $width={width}><Caret color={color} /></IconButton>
);

const Big = ({ width, icon, text, second, on }) => (
    <BigButton type="button" $width={width} $on={on}>
        {icon}
        <span>{text}</span>
        <CaretLine>{second}<Caret color={on ? '#6c6c6e' : '#b8b8ba'} /></CaretLine>
    </BigButton>
);

const Ribbon = () => (
    <RibbonBar>
        <Group title="剪贴板" width={154} pad={2} launcher>
            <Big width={60} icon={<PasteIcon />} text="粘贴" on />
            <SmallList $width={92} $top={3}>
                <SmallButton type="button" $on><IconSlot $width={26}><CutIcon /></IconSlot>剪切</SmallButton>
                <SmallButton type="button" $on><IconSlot $width={26}><CopyIcon /></IconSlot><span>复制</span><Caret color="#6c6c6e" /></SmallButton>
                <SmallButton type="button"><IconSlot $width={26}><BrushIcon /></IconSlot>格式刷</SmallButton>
            </SmallList>
        </Group>
        <Group title="字体" width={322} pad={6} rows launcher>
            <ToolRow>
                <ComboBox $width={186}>
                    <select aria-label="字体" defaultValue=""><option value="" aria-label="无" /></select>
                    <Caret />
                </ComboBox>
                <ComboBox $width={66}>
                    <select aria-label="字号" defaultValue="11"><option>11</option></select>
                    <Caret />
                </ComboBox>
                <IconButton type="button" aria-label="增大字号" $width={34}>
                    <Letter $bold $size={24}>A</Letter><SizeMark><Arrow width={7} height={4} /></SizeMark>
                </IconButton>
                <IconButton type="button" aria-label="减小字号" $width={26}>
                    <Letter $bold $size={20}>A</Letter><SizeMark><Arrow turn={180} width={7} height={4} /></SizeMark>
                </IconButton>
            </ToolRow>
            <ToolRow>
                <IconButton type="button"><Letter $bold>B</Letter></IconButton>
                <IconButton type="button" $width={32}><Letter $italic>I</Letter></IconButton>
                <IconButton type="button"><Letter $underline>U</Letter></IconButton>
                <CaretButton label="下划线选项" />
                <Separator />
                <IconButton type="button" aria-label="边框" $width={32}><BordersIcon /></IconButton>
                <CaretButton label="边框选项" width={12} />
                <Separator />
                <IconButton type="button" aria-label="填充颜色" $width={34}><BucketIcon /></IconButton>
                <CaretButton label="填充颜色选项" width={12} />
                <IconButton type="button" $width={28}><Letter $size={22}>A</Letter></IconButton>
                <CaretButton label="字体颜色选项" />
                <Separator />
                <IconButton type="button" aria-label="拼音" $width={32}>
                    <svg width="26" height="28" viewBox="0 0 26 28" fill="#7d7d7f">
                        <text x="0" y="10" fontSize="12" fontWeight="600">wén</text>
                        <text x="5" y="27" fontSize="16">文</text>
                    </svg>
                </IconButton>
                <CaretButton label="拼音选项" width={14} color="#7d7d7f" />
            </ToolRow>
        </Group>
        <Group title="对齐方式" width={319} pad={5} rows launcher>
            <ToolRow>
                <IconButton type="button" aria-label="顶端对齐" $width={31}><LinesIcon kind="narrow" y={0} /></IconButton>
                <IconButton type="button" aria-label="垂直居中" $width={31}><LinesIcon kind="narrow" y={4} /></IconButton>
                <IconButton type="button" aria-label="底端对齐" $width={31}><LinesIcon kind="narrow" y={9} /></IconButton>
                <Separator $width={10} />
                <IconButton type="button" aria-label="方向"><OrientationIcon /></IconButton>
                <CaretButton label="方向选项" width={12} />
                <Spacer />
                <Separator $width={12} />
                <SmallButton type="button"><IconSlot $width={26}><WrapIcon /></IconSlot>自动换行</SmallButton>
            </ToolRow>
            <ToolRow>
                <IconButton type="button" aria-label="左对齐" $width={31}><LinesIcon kind="left" /></IconButton>
                <IconButton type="button" aria-label="居中" $width={31}><LinesIcon kind="center" /></IconButton>
                <IconButton type="button" aria-label="右对齐" $width={31}><LinesIcon kind="right" /></IconButton>
                <Separator $width={10} />
                <IconButton type="button" aria-label="减少缩进量"><IndentIcon /></IconButton>
                <IconButton type="button" aria-label="增加缩进量"><IndentIcon flip /></IconButton>
                <Separator $width={14} />
                <SmallButton type="button"><IconSlot $width={26}><MergeIcon /></IconSlot>合并后居中<Caret color="#b3b3b5" /></SmallButton>
            </ToolRow>
        </Group>
        <Group title="数字" width={186} pad={5} rows>
            <ToolRow>
                <ComboBox $width={176}>
                    <select aria-label="数字格式" defaultValue="常规"><option>常规</option></select>
                    <Caret />
                </ComboBox>
            </ToolRow>
            <ToolRow>
                <IconButton type="button" aria-label="会计数字格式"><CurrencyIcon /></IconButton>
                <CaretButton label="会计数字格式选项" width={12} />
                <IconButton type="button" $width={36}>%</IconButton>
                <IconButton type="button" aria-label="千位分隔样式" $width={26}>
                    <svg width="8" height="12" viewBox="0 0 8 12"><path d="M4 0c4 0 5 6-1 12l-1-1c2-2 2-3 2-4C-1 7-1 0 4 0z" fill="#737375" /></svg>
                </IconButton>
                <Separator $width={12} />
                <IconButton type="button" aria-label="增加小数位数"><DecimalIcon /></IconButton>
                <IconButton type="button" aria-label="减少小数位数"><DecimalIcon flip /></IconButton>
            </ToolRow>
        </Group>
        <Group title="样式" width={270} pad={3}>
            <Big width={79} icon={<ConditionalIcon />} text="条件格式" />
            <Big width={87} icon={<TableStyleIcon />} text="套用" second="表格格式" />
            <Big width={98} icon={<CellStyleIcon />} text="单元格样式" />
        </Group>
        <Group title="单元格" width={183} pad={4}>
            <Big width={58} icon={<InsertIcon />} text="插入" />
            <Big width={58} icon={<DeleteIcon />} text="删除" />
            <Big width={58} icon={<FormatIcon />} text="格式" />
        </Group>
        <Group title="编辑" width={317} pad={7}>
            <SmallList $width={116}>
                <SmallButton type="button" $on $height={30}>
                    <IconSlot>
                        <svg width="16" height="18" viewBox="0 0 16 18"><path d="M1 1h13v4h-1c0-2-1-2-3-2H5l5 6-6 6h7c2 0 3-1 3-3h1v5H1v-1l6-7-6-7z" fill="#1d1d1f" /></svg>
                    </IconSlot>
                    <span>自动求和</span><Caret color="#5d5d5f" />
                </SmallButton>
                <SmallButton type="button" $height={30}><IconSlot><FillIcon /></IconSlot><span>填充</span><Caret color="#b8b8ba" /></SmallButton>
                <SmallButton type="button" $on $height={30}><IconSlot><EraserIcon /></IconSlot><span>清除</span><Caret color="#5d5d5f" /></SmallButton>
            </SmallList>
            <Big width={94} icon={<SortIcon />} text="排序和筛选" />
            <Big width={96} icon={<BinocularsIcon />} text="查找和选择" />
        </Group>
    </RibbonBar>
);

const SheetTable = () => (
    <Sheet>
        <colgroup>
            <col width="49" />
            {columns.map(([name, width]) => <col key={name} width={width || undefined} />)}
        </colgroup>
        <thead>
            <tr>
                <Corner aria-label="全选" />
                {columns.map(([name]) => <th key={name} scope="col">{name}</th>)}
            </tr>
        </thead>
        <tbody>
            <tr>
                <th scope="row">1</th>
                <Cell $head="left" $current>被除数</Cell>
                <Cell $head="left"><Divisor>除数</Divisor></Cell>
                <Cell $head="center">余数</Cell>
                {columns.slice(3).map(([name]) => <Cell key={name} />)}
            </tr>
            {Array.from({ length: 17 }, (_, i) => (
                <tr key={i}>
                    <th scope="row">{i + 2}</th>
                    {columns.map(([name], c) => <Cell key={name}>{values[i]?.[c]}</Cell>)}
                </tr>
            ))}
        </tbody>
    </Sheet>
);

const RuleDialog = () => {
    const formulaRef = useRef(null);

    useEffect(() => {
        formulaRef.current.focus();
        formulaRef.current.setSelectionRange(15, 17);
    }, []);

    return (
        <Dialog role="dialog" aria-labelledby="rule-title" onSubmit={e => e.preventDefault()}>
            <DialogTitle>
                <h2 id="rule-title">新建格式规则</h2>
                <DialogControls>
                    <button type="button" aria-label="帮助">
                        <svg width="14" height="20" viewBox="0 0 14 20" fill="#ececec" stroke="#6d6d6f" strokeWidth="1.2">
                            <path d="M1 6c0-7 12-7 12 0 0 4-4 4-4 7H5c0-5 4-5 4-7 0-2-4-2-4 1H1zM5 15h4v4H5z" />
                        </svg>
                    </button>
                    <button type="button" aria-label="关闭"><CloseIcon fill="#f4f4f4" stroke="#7d4a44" width={16} /></button>
                </DialogControls>
            </DialogTitle>
            <DialogBody>
                <h3 id="rule-types">选择规则类型<small>(<u>S</u>):</small></h3>
                <RuleList role="listbox" aria-labelledby="rule-types">
                    {rules.map((rule, i) => (
                        <Rule key={rule} role="option" aria-selected={i === 5} $selected={i === 5}>
                            <svg width="14" height="12" viewBox="0 0 14 12"><path d="M0 0l14 6-14 6z" fill="#101012" /></svg>
                            {rule}
                        </Rule>
                    ))}
                </RuleList>
                <h3>编辑规则说明<small>(<u>E</u>):</small></h3>
                <RulePanel>
                    <label htmlFor="rule-formula">为符合此公式的值设置格式<small>(<u>O</u>):</small></label>
                    <RefField>
                        <input id="rule-formula" ref={formulaRef} defaultValue="=mod(row(a1),5)=0" spellCheck="false" />
                        <button type="button" aria-label="选择区域"><RefPickerIcon /></button>
                    </RefField>
                    <hr />
                    <PreviewRow>
                        <span>预览<small>:</small></span>
                        <output>未设定格式</output>
                        <PushButton type="button" $width={118}>格式<small>(<u>F</u>)...</small></PushButton>
                    </PreviewRow>
                </RulePanel>
                <DialogActions>
                    <PushButton type="submit" $primary>确定</PushButton>
                    <PushButton type="button">取消</PushButton>
                </DialogActions>
            </DialogBody>
        </Dialog>
    )
}

const App = () => {
    return (
        <Screen>
            <GlobalStyle />
            <Workbook>
                <TitleBar>
                    <QuickAccess>
                        <ExcelIcon />
                        <Separator $width={10} />
                        <IconButton aria-label="保存" $width={28}><SaveIcon /></IconButton>
                        <IconButton aria-label="撤消"><UndoIcon color="#4468b4" /></IconButton>
                        <CaretButton label="撤消选项" width={12} color="#3c3c3e" />
                        <IconButton aria-label="恢复"><UndoIcon color="#a9a9ab" flip /></IconButton>
                        <CaretButton label="恢复选项" width={10} />
                        <IconButton aria-label="打印预览"><PreviewIcon /></IconButton>
                        <Separator $width={10} />
                        <IconButton aria-label="自定义快速访问工具栏" $width={16}>
                            <svg width="10" height="10" viewBox="0 0 10 10"><path d="M0 0h10v2H0zM1 5h8l-4 5z" fill="#2d2d30" /></svg>
                        </IconButton>
                    </QuickAccess>
                    <h1>Mod.xlsx - Microsoft Excel</h1>
                    <WindowControls>
                        <IconButton aria-label="最小化" $width={43}><MinimizeIcon /></IconButton>
                        <IconButton aria-label="还原" $width={41}><RestoreIcon /></IconButton>
                        <IconButton aria-label="关闭" $width={73}><CloseIcon fill="#e9e9e9" stroke="#b5b5b7" /></IconButton>
                    </WindowControls>
                </TitleBar>
                <TabRow>
                    <TabList>
                        <Tab $file>文件</Tab>
                        <Tab $active>开始</Tab>
                        {tabs.map(tab => <Tab key={tab}>{tab}</Tab>)}
                    </TabList>
                    <TabTools>
                        <IconButton aria-label="功能区最小化" $width={26}><CollapseIcon /></IconButton>
                        <IconButton aria-label="帮助" $width={32}><HelpIcon /></IconButton>
                        <IconButton aria-label="最小化窗口"><MinimizeIcon small /></IconButton>
                        <IconButton aria-label="还原窗口"><SmallRestoreIcon /></IconButton>
                        <IconButton aria-label="关闭窗口" $width={28}><CloseIcon fill="#f0f0f0" stroke="#58585a" /></IconButton>
                    </TabTools>
                </TabRow>
                <Ribbon />
                <FormulaBar>
                    <NameBox>
                        <input aria-label="名称框" defaultValue="A1" />
                        <button aria-label="名称列表"><Caret size={12} /></button>
                    </NameBox>
                    <FunctionCap>
                        <button aria-label="插入函数">f<sub>x</sub></button>
                    </FunctionCap>
                    <FormulaInput aria-label="编辑栏" defaultValue="除数" />
                    <IconButton aria-label="展开编辑栏" $width={25}>
                        <svg width="12" height="9" viewBox="0 0 12 9"><path d="M0 0h3l3 4 3-4h3v3L6 9 0 3z" fill="#5d6166" /></svg>
                    </IconButton>
                </FormulaBar>
                <SheetArea>
                    <SheetView><SheetTable /></SheetView>
                    <VScroll>
                        <SplitBox />
                        <button aria-label="向上滚动"><Arrow /></button>
                        <VThumb><GripIcon /></VThumb>
                        <ScrollSpace />
                        <button aria-label="向下滚动"><Arrow turn={180} /></button>
                    </VScroll>
                </SheetArea>
                <SheetBar>
                    <SheetNav>
                        <IconButton aria-label="第一张" $width={23}><svg width="9" height="12" viewBox="0 0 9 12"><path d="M0 0h1v12H0zM9 0v12L2 6z" fill="#4d545b" /></svg></IconButton>
                        <IconButton aria-label="上一张" $width={24}><svg width="7" height="12" viewBox="0 0 7 12"><path d="M7 0v12L0 6z" fill="#4d545b" /></svg></IconButton>
                        <IconButton aria-label="下一张" $width={23}><svg width="7" height="12" viewBox="0 0 7 12"><path d="M0 0v12l7-6z" fill="#4d545b" /></svg></IconButton>
                        <IconButton aria-label="最后一张" $width={24}><svg width="9" height="12" viewBox="0 0 9 12"><path d="M8 0h1v12H8zM0 0v12l7-6z" fill="#4d545b" /></svg></IconButton>
                    </SheetNav>
                    <SheetTab>MOD</SheetTab>
                    <NewSheetButton aria-label="插入工作表"><NewSheetIcon /></NewSheetButton>
                    <HScroll>
                        <SplitBox $vertical />
                        <button aria-label="向左滚动"><Arrow turn={270} /></button>
                        <HThumb><GripIcon vertical /></HThumb>
                        <ScrollSpace />
                        <button aria-label="向右滚动"><Arrow turn={90} /></button>
                        <SplitBox $vertical />
                    </HScroll>
                </SheetBar>
                <StatusBar>
                    <StatusSide>
                        <StatusText>输入</StatusText>
                        <StatusLine />
                        <IconButton aria-label="录制宏" $width={26}><MacroIcon /></IconButton>
                        <StatusLine />
                    </StatusSide>
                    <StatusSide>
                        <Totals>
                            <StatusText>平均值: 84.23809524</StatusText>
                            <StatusText>计数: 45</StatusText>
                            <StatusText>求和: 3538</StatusText>
                        </Totals>
                        <StatusLine />
                        <IconButton aria-label="普通视图" $width={20}><ViewIcon kind="normal" /></IconButton>
                        <IconButton aria-label="页面布局视图" $width={20}><ViewIcon kind="layout" /></IconButton>
                        <IconButton aria-label="分页预览" $width={20}><ViewIcon kind="break" /></IconButton>
                        <ZoomSlider>
                            <label htmlFor="zoom">120%</label>
                            <button aria-label="缩小"><ZoomButtonIcon /></button>
                            <input id="zoom" type="range" defaultValue="50" />
                            <button aria-label="放大"><ZoomButtonIcon plus /></button>
                        </ZoomSlider>
                    </StatusSide>
                </StatusBar>
                <RuleDialog />
                <Pointer width="16" height="27" viewBox="0 0 16 27">
                    <path d="M1 1h5l2 2 2-2h5M8 3v21M1 26h5l2-2 2 2h5" fill="none" stroke="#101012" strokeWidth="2" />
                </Pointer>
            </Workbook>
            <Subtitle>然后除以5了  判断是否等于0</Subtitle>
        </Screen>
    )
}

export default App;
